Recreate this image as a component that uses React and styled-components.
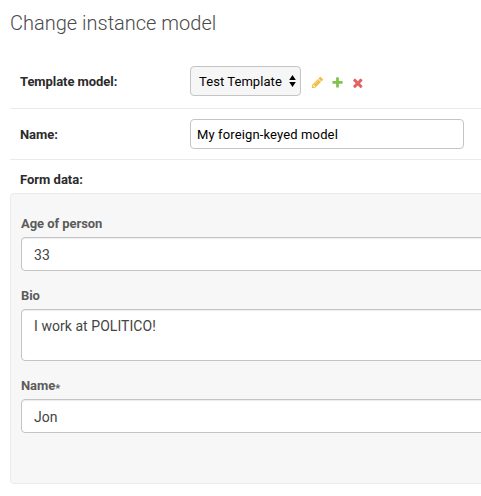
import React from 'react';
import styled, { createGlobalStyle } from 'styled-components';

const GlobalStyle = createGlobalStyle`
  * { box-sizing: border-box; }
  html, body { margin: 0; background: #fff; overflow: hidden; }
  body { font-family: Roboto, "Liberation Sans", sans-serif; font-size: 13px; color: #333; }
`;

const Page = styled.main`
  height: 496px;
  padding: 10px 0 0 10px;
  overflow: hidden;
`;

const Title = styled.h1`
  margin: 0;
  height: 44px;
  font-size: 20px;
  line-height: 26px;
  font-weight: 300;
  color: #4a4a4a;
`;

const Row = styled.div`
  display: flex;
  align-items: flex-start;
  height: ${(p) => p.$height}px;
  padding: ${(p) => p.$top}px 10px 0;
  border-bottom: 1px solid #eaeaea;
`;

const RowLabel = styled.label`
  width: 170px;
  line-height: ${(p) => p.$line || 30}px;
  font-weight: 700;
  letter-spacing: -0.06px;
  color: #2b2b2b;
`;

const Select = styled.button`
  display: flex;
  align-items: center;
  justify-content: space-between;
  width: 111px;
  height: 30px;
  padding: 1px 4px 0 8px;
  border: 1px solid #c4c4c4;
  border-radius: 4px;
  background: #f6f6f6;
  color: #000;
  font: 400 13px/28px Roboto, sans-serif;
  letter-spacing: 0.06px;
  white-space: nowrap;
`;

const Arrows = styled.svg`
  width: 7px;
  height: 12px;
  margin-top: -1px;
  fill: #000;
`;

const Actions = styled.div`
  display: flex;
  gap: 7px;
  padding: 10px 0 0 10px;
`;

const ActionIcon = styled.svg`
  width: 13px;
  height: 13px;
  overflow: visible;
  fill: ${(p) => p.$color};
`;

const TextInput = styled.input`
  width: 274px;
  height: 30px;
  padding: 0 6px;
  border: 1px solid #c4c4c4;
  border-radius: 4px;
  background: #fff;
  color: #000;
  font: 400 13px/28px Roboto, sans-serif;
  letter-spacing: 0.13px;
  outline: none;
`;

const SectionLabel = styled.div`
  height: 33px;
  padding: 5px 10px 0;
  line-height: 30px;
  font-weight: 700;
  color: #2b2b2b;
`;

const Panel = styled.section`
  width: 500px;
  height: 291px;
  padding: 20px 10px 0;
  border: 1px solid #eaeaea;
  border-radius: 4px;
  background: #f7f7f7;
`;

const Field = styled.div`
  margin-bottom: 15px;
`;

const FieldLabel = styled.label`
  display: block;
  height: 23px;
  line-height: 19px;
  font-weight: 700;
  letter-spacing: -0.06px;
  color: #5b5b5b;
`;

const Required = styled.span`
  font-size: 11px;
  line-height: 0;
  vertical-align: -2px;
`;

const FieldInput = styled.input`
  display: block;
  width: 500px;
  height: 34px;
  padding: 2px 12px 0;
  border: 1px solid #c4c4c4;
  border-radius: 4px;
  background: #fff;
  box-shadow: inset 0 1px 1px rgba(0, 0, 0, 0.075);
  color: #444;
  font: 400 14px/20px Roboto, sans-serif;
  letter-spacing: 0.05px;
  outline: none;
`;

const FieldArea = styled(FieldInput).attrs({ as: 'textarea' })`
  height: 52px;
  padding: 6px 12px;
  resize: none;
  overflow: hidden;
`;

const PENCIL =
  'M491 1536l91-91-235-235-91 91v107h128v128h107zm523-928q0-22-22-22-10 0-17 7l-542 542q-7 7-7 17 0 22 22 22 10 0 17-7l542-542q7-7 7-17zm-54-192l416 416-832 832h-416v-416zm683 96q0 53-37 90l-166 166-416-416 166-165q36-38 90-38 53 0 91 38l235 234q37 39 37 91z';
const PLUS =
  'M1600 796v192q0 40-28 68t-68 28h-416v416q0 40-28 68t-68 28h-192q-40 0-68-28t-28-68v-416h-416q-40 0-68-28t-28-68v-192q0-40 28-68t68-28h416v-416q0-40 28-68t68-28h192q40 0 68 28t28 68v416h416q40 0 68 28t28 68z';
const CROSS =
  'M1490 1322q0 40-28 68l-136 136q-28 28-68 28t-68-28l-294-294-294 294q-28 28-68 28t-68-28l-136-136q-28-28-28-68t28-68l294-294-294-294q-28-28-28-68t28-68l136-136q28-28 68-28t68 28l294 294 294-294q28-28 68-28t68 28l136 136q28 28 28 68t-28 68l-294 294 294 294q28 28 28 68z';

const actions = [
  { name: 'Change', path: PENCIL, color: '#f2be42', box: '0 0 1792 1792' },
  { name: 'Add', path: PLUS, color: '#7fc24c', box: '0 0 1792 1792' },
  { name: 'Delete', path: CROSS, color: '#e06464', box: '30 30 1650 1650' },
];

export default function App() {
  return (
    <>
      <GlobalStyle />
      <Page>
        <Title>Change instance model</Title>
        <Row $height={55} $top={12}>
          <RowLabel $line={32}>Template model:</RowLabel>
          <Select type="button">
            Test Template
            <Arrows viewBox="0 0 7 12">
              <path d="M3.5 0L6.8 5H.2zM3.5 12L.2 7h6.6z" />
            </Arrows>
          </Select>
          <Actions>
            {actions.map((a) => (
              <ActionIcon key={a.name} viewBox={a.box} $color={a.color} aria-label={a.name}>
                <path d={a.path} />
              </ActionIcon>
            ))}
          </Actions>
        </Row>
        <Row $height={51} $top={10}>
          <RowLabel htmlFor="name" $line={31}>Name:</RowLabel>
          <TextInput id="name" defaultValue="My foreign-keyed model" />
        </Row>
        <SectionLabel>Form data:</SectionLabel>
        <Panel>
          <Field>
            <FieldLabel htmlFor="age">Age of person</FieldLabel>
            <FieldInput id="age" defaultValue="33" />
          </Field>
          <Field>
            <FieldLabel htmlFor="bio">Bio</FieldLabel>
            <FieldArea id="bio" defaultValue="I work at POLITICO!" />
          </Field>
          <Field>
            <FieldLabel htmlFor="person">
              Name<Required>*</Required>
            </FieldLabel>
            <FieldInput id="person" defaultValue="Jon" />
          </Field>
        </Panel>
      </Page>
    </>
  );
}
